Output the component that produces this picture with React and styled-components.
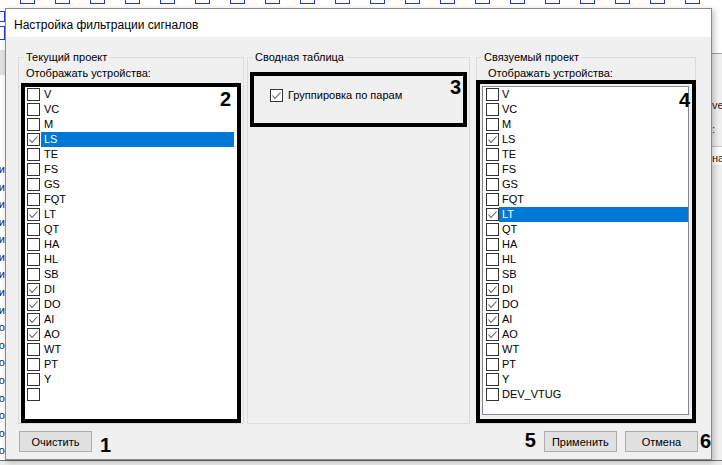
import React from 'react';
import styled, { createGlobalStyle } from 'styled-components';

const GlobalStyle = createGlobalStyle`
  html, body { margin: 0; padding: 0; background: #fff; }
  body { font-family: "Liberation Sans", Arial, sans-serif; color: #000; }
`;

const Screen = styled.div`
  width: 722px;
  height: 465px;
  overflow: hidden;
  display: flex;
  flex-direction: column;
  background: #fff;
`;

const Ruler = styled.div`
  flex: none;
  height: 8px;
  display: flex;
  gap: 20px;
  padding-left: 20px;
  align-items: flex-start;
`;

const RulerMark = styled.span`
  flex: none;
  width: 13px;
  height: 3px;
  border: 1px solid #1f3ad6;
  border-top: none;
`;

const Middle = styled.div`
  flex: none;
  height: 452px;
  display: flex;
`;

const LeftPane = styled.div`
  flex: none;
  width: 5px;
  overflow: hidden;
  display: flex;
  flex-direction: column;
`;

const Bracket = styled.div`
  height: ${p => p.$h}px;
  margin-top: ${p => p.$top}px;
  border: 1px solid #1f3ad6;
  border-left: none;
`;

const GreyBand = styled.div`
  height: 26px;
  margin-top: 10px;
  background: #e2e2e2;
`;

const Fragments = styled.div`
  margin-top: 86px;
  display: flex;
  flex-direction: column;
  align-items: flex-end;
  font-size: 11px;
  line-height: 17.6px;
  color: #1b1b5a;
  white-space: nowrap;
`;

const RightPane = styled.div`
  flex: none;
  width: 10px;
  display: flex;
  flex-direction: column;
  overflow: hidden;
`;

const RightTop = styled.div`
  height: 45px;
  background: #fff;
`;

const RightBody = styled.div`
  flex: 1;
  background: #f0f0f0;
  border-top: 1px solid #a0a0a0;
  padding-top: 44px;
  font-size: 11px;
  line-height: 14px;
  color: #222;
  white-space: nowrap;
  display: flex;
  flex-direction: column;
  gap: 10px;
`;

const RightRule = styled.div`
  border-top: 1px solid #c8c8c8;
  background: #fff;
  padding-top: 4px;
`;

const BottomStrip = styled.div`
  flex: 1;
  border-top: 1px solid #6d6d6d;
  background: #ededed;
`;

/* dialog */

const Window = styled.div`
  position: relative;
  z-index: 1;
  flex: none;
  width: 707px;
  height: 452px;
  box-sizing: border-box;
  border: 1px solid #8a8a8a;
  background: #f0f0f0;
  box-shadow: 2px 2px 6px rgba(0, 0, 0, 0.25);
  display: flex;
  flex-direction: column;
  overflow: hidden;
`;

const TitleBar = styled.div`
  flex: none;
  height: 28px;
  box-sizing: border-box;
  padding: 4px 0 0 8px;
  background: #fff;
  font-size: 12px;
  line-height: 24px;
`;

const Body = styled.div`
  flex: 1;
  padding: 14px 12px 0 12px;
  display: flex;
  flex-direction: column;
`;

const Groups = styled.div`
  display: grid;
  grid-template-columns: 226px 223px 223px;
  column-gap: 3px;
`;

const Group = styled.fieldset`
  box-sizing: border-box;
  height: 373px;
  min-width: 0;
  margin: 0 0 0 ${p => p.$shift || 0}px;
  padding: 0 2px;
  border: 1px solid #dcdcdc;
  display: flex;
  flex-direction: column;
`;

const Legend = styled.legend`
  font-size: 11px;
  line-height: 13px;
  padding: 0 2px;
  margin-left: 3px;
`;

const FieldLabel = styled.div`
  font-size: 11px;
  line-height: 13px;
  margin-top: 3px;
  padding-left: ${p => p.$indent}px;
`;

const Marked = styled.div`
  position: relative;
  box-sizing: border-box;
  height: ${p => p.$h}px;
  margin: ${p => p.$margin};
  border: 4px solid #000;
  background: ${p => p.$bg};
  display: flex;
  flex-direction: column;
`;

const Tag = styled.span`
  position: absolute;
  top: ${p => p.$top}px;
  right: ${p => p.$right}px;
  font-size: 20px;
  line-height: 20px;
  font-weight: bold;
`;

const List = styled.div`
  flex: 1;
  background: #fff;
  overflow: hidden;
  border: ${p => (p.$framed ? '1px solid #828790' : 'none')};
  margin: ${p => (p.$framed ? '2px 3px 4px 2px' : '0')};
`;

const Row = styled.div`
  display: flex;
  align-items: flex-start;
  height: 15px;
  padding-left: ${p => p.$pad}px;
  padding-right: ${p => p.$trail}px;
`;

const Box = styled.span`
  flex: none;
  width: 13px;
  height: 13px;
  box-sizing: border-box;
  margin-top: 1px;
  border: 1px solid #333;
  background: #fff;
  display: flex;
`;

const ItemText = styled.span`
  flex: 1;
  height: 15px;
  line-height: 15px;
  margin-left: ${p => p.$gap}px;
  padding-left: 3px;
  font-size: 11px;
  white-space: nowrap;
  background: ${p => (p.$selected ? '#0078d7' : 'transparent')};
  color: ${p => (p.$selected ? '#fff' : '#000')};
`;

const PairRow = styled.div`
  display: flex;
  align-items: center;
  padding: 12px 0 0 16px;
  font-size: 11px;
  line-height: 13px;
`;

const PairText = styled.span`
  margin-left: 5px;
`;

const Footer = styled.div`
  display: flex;
  align-items: flex-start;
  padding: 7px 0 0 1px;
  margin-right: -12px;
`;

const Button = styled.button`
  flex: none;
  width: 73px;
  height: 21px;
  box-sizing: border-box;
  margin-left: ${p => p.$ml || 0}px;
  padding: 2px 0 0;
  border: 1px solid #adadad;
  border-radius: 0;
  background: #e1e1e1;
  font-family: "Liberation Sans", Arial, sans-serif;
  font-size: 11px;
  line-height: 13px;
  color: #000;
  display: flex;
  align-items: center;
  justify-content: center;
`;

const Num = styled.span`
  flex: none;
  margin-left: ${p => p.$ml}px;
  margin-top: ${p => p.$mt}px;
  font-size: 20px;
  line-height: 20px;
  font-weight: bold;
`;

const Spacer = styled.div`
  flex: 1;
`;

function Check({ on }) {
  return (
    <Box>
      {on && (
        <svg width="11" height="11" viewBox="0 0 11 11">
          <polyline points="1.5,5.5 4,8.5 9.5,2.5" fill="none" stroke="#5a5a5a" strokeWidth="1.1" />
        </svg>
      )}
    </Box>
  );
}

const checked = ['LS', 'LT', 'DI', 'DO', 'AI', 'AO'];
const base = ['V', 'VC', 'M', 'LS', 'TE', 'FS', 'GS', 'FQT', 'LT', 'QT', 'HA', 'HL', 'SB', 'DI', 'DO', 'AI', 'AO', 'WT', 'PT', 'Y'];
const currentItems = [...base, ''];
const linkedItems = [...base, 'DEV_VTUG'];

function DeviceList({ items, selected, framed, pad, gap, trail }) {
  return (
    <List $framed={framed}>
      {items.map((name, i) => (
        <Row key={i} $pad={pad} $trail={trail}>
          <Check on={checked.includes(name)} />
          <ItemText $gap={gap} $selected={name === selected}>{name}</ItemText>
        </Row>
      ))}
    </List>
  );
}

export default function App() {
  return (
    <Screen>
      <GlobalStyle />
      <Ruler>
        {Array.from({ length: 20 }, (_, i) => <RulerMark key={i} />)}
      </Ruler>
      <Middle>
        <LeftPane>
          <Bracket $top={3} $h={9} />
          <Bracket $top={4} $h={12} />
          <GreyBand />
          <Fragments>
            {Array.from({ length: 17 }, (_, i) => (
              <span key={i}>{i < 9 ? 'ими' : 'со'}</span>
            ))}
          </Fragments>
        </LeftPane>
        <Window>
          <TitleBar>Настройка фильтрации сигналов</TitleBar>
          <Body>
            <Groups>
              <Group>
                <Legend>Текущий проект</Legend>
                <FieldLabel $indent={5}>Отображать устройства:</FieldLabel>
                <Marked $h={340} $margin="3px 0 0" $bg="#fff">
                  <DeviceList items={currentItems} selected="LS" pad={2} gap={1} trail={3} />
                  <Tag $top={2} $right={6}>2</Tag>
                </Marked>
              </Group>
              <Group>
                <Legend>Сводная таблица</Legend>
                <Marked $h={55} $margin="8px 0 0" $bg="transparent">
                  <PairRow>
                    <Check on />
                    <PairText>Группировка по парам</PairText>
                  </PairRow>
                  <Tag $top={1} $right={2}>3</Tag>
                </Marked>
              </Group>
              <Group $shift={3}>
                <Legend>Связуемый проект</Legend>
                <FieldLabel $indent={9}>Отображать устройства:</FieldLabel>
                <Marked $h={347} $margin="0 -3px" $bg="#f0f0f0">
                  <DeviceList items={linkedItems} selected="LT" framed pad={3} gap={0} trail={0} />
                  <Tag $top={6} $right={2}>4</Tag>
                </Marked>
              </Group>
            </Groups>
            <Footer>
              <Button>Очистить</Button>
              <Num $ml={8} $mt={4}>1</Num>
              <Spacer />
              <Num $ml={0} $mt={-1}>5</Num>
              <Button $ml={8}>Применить</Button>
              <Button $ml={8}>Отмена</Button>
              <Num $ml={2} $mt={0}>6</Num>
            </Footer>
          </Body>
        </Window>
        <RightPane>
          <RightTop />
          <RightBody>
            <span>ver</span>
            <span>:</span>
            <RightRule>на</RightRule>
          </RightBody>
        </RightPane>
      </Middle>
      <BottomStrip />
    </Screen>
  );
}
